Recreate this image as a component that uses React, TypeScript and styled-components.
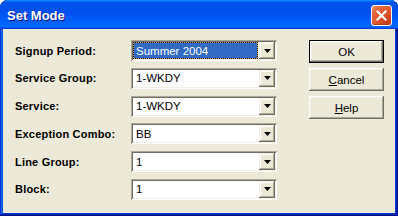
import { Fragment } from "react";
import styled, { createGlobalStyle } from "styled-components";

const GlobalStyle = createGlobalStyle`
  body {
    margin: 0;
    background: #ffffff;
  }
`;

const Window = styled.div`
  width: 398px;
  height: 216px;
  box-sizing: border-box;
  display: flex;
  flex-direction: column;
  background: #0831d9;
  border-radius: 8px 8px 0 0;
  box-shadow: inset -1px -1px #00138c, inset 1px 1px #0831d9,
    inset -2px -2px #001ea0, inset 2px 2px #166aee, inset -3px -3px #003bda,
    inset 3px 3px #0855dd;
  font-family: "Liberation Sans", Arial, sans-serif;
  overflow: hidden;
`;

const TitleBar = styled.div`
  height: 29px;
  flex: none;
  display: flex;
  align-items: center;
  justify-content: space-between;
  padding: 0 6px 0 7px;
  border-radius: 8px 8px 0 0;
  background: linear-gradient(
    180deg,
    #0997ff,
    #0053ee 8%,
    #0050ee 40%,
    #0066ff 88%,
    #0066ff 93%,
    #005bff 95%,
    #003dd7 96%,
    #003dd7
  );
`;

const Title = styled.span`
  color: #ffffff;
  font-weight: bold;
  font-size: 13px;
  text-shadow: 1px 1px #0f1089;
  margin-top: 1px;
`;

const CloseButton = styled.button`
  width: 21px;
  height: 21px;
  margin-top: 2px;
  padding: 0;
  border: 1px solid #ffffff;
  border-radius: 3px;
  display: flex;
  align-items: center;
  justify-content: center;
  background: radial-gradient(
    circle at 85% 85%,
    #c43c14 0%,
    #e0582e 50%,
    #e4683f 75%,
    #f0a083 100%
  );
  box-shadow: inset 0 -1px 1px #b23a10;
`;

const Content = styled.div`
  flex: 1;
  margin: 0 3px 3px;
  background: #ece9d8;
  display: flex;
  align-items: flex-start;
  gap: 32px;
  padding: 11px 11px 0 12px;
`;

const Form = styled.div`
  display: grid;
  grid-template-columns: 116px 146px;
  row-gap: 6.8px;
  align-items: center;
`;

const Label = styled.span`
  font-size: 11px;
  font-weight: bold;
  letter-spacing: 0.2px;
  color: #000000;
`;

const Combo = styled.div`
  height: 21px;
  box-sizing: border-box;
  padding: 2px;
  display: flex;
  background: #ffffff;
  box-shadow: inset 1px 1px #aca899, inset -1px -1px #ffffff,
    inset 2px 2px #716f64, inset -2px -2px #f1efe2;
`;

const Value = styled.span<{ $selected?: boolean }>`
  flex: 1;
  display: flex;
  align-items: center;
  font-size: 11.5px;
  box-sizing: border-box;
  padding-left: 2px;
  margin-right: 1px;
  color: ${(p) => (p.$selected ? "#ffffff" : "#000000")};
  border: 1px dotted ${(p) => (p.$selected ? "#000000" : "transparent")};
  background: ${(p) =>
    p.$selected
      ? "linear-gradient(#316ac5, #316ac5) padding-box, linear-gradient(#d8a838, #d8a838) border-box"
      : "none"};
`;

const DropButton = styled.span`
  width: 16px;
  flex: none;
  display: flex;
  align-items: center;
  justify-content: center;
  background: #ece9d8;
  box-shadow: inset -1px -1px #716f64, inset 1px 1px #f1efe2,
    inset -2px -2px #aca899, inset 2px 2px #ffffff;
`;

const Buttons = styled.div`
  display: flex;
  flex-direction: column;
  gap: 5px;
`;

const Button = styled.button<{ $default?: boolean }>`
  width: 75px;
  height: 23px;
  padding: 0;
  border: ${(p) => (p.$default ? "1px solid #000000" : "none")};
  background: #ece9d8;
  font-family: "Liberation Sans", Arial, sans-serif;
  font-size: 11.5px;
  color: #000000;
  box-shadow: inset -1px -1px #716f64, inset 1px 1px #ffffff,
    inset -2px -2px #aca899, inset 2px 2px #f1efe2;
`;

const Arrow = () => (
  <svg width="7" height="4" viewBox="0 0 7 4">
    <polygon points="0,0 7,0 3.5,4" fill="#000000" />
  </svg>
);

const fields = [
  { label: "Signup Period:", value: "Summer 2004", selected: true },
  { label: "Service Group:", value: "1-WKDY" },
  { label: "Service:", value: "1-WKDY" },
  { label: "Exception Combo:", value: "BB" },
  { label: "Line Group:", value: "1" },
  { label: "Block:", value: "1" },
];

const App = () => {
  return (
    <>
      <GlobalStyle />
      <Window>
        <TitleBar>
          <Title>Set Mode</Title>
          <CloseButton>
            <svg width="11" height="11" viewBox="0 0 11 11">
              <path
                d="M1.5 1.5 L9.5 9.5 M9.5 1.5 L1.5 9.5"
                stroke="#ffffff"
                strokeWidth="2.2"
                strokeLinecap="square"
              />
            </svg>
          </CloseButton>
        </TitleBar>
        <Content>
          <Form>
            {fields.map((f) => (
              <Fragment key={f.label}>
                <Label>{f.label}</Label>
                <Combo>
                  <Value $selected={f.selected}>{f.value}</Value>
                  <DropButton>
                    <Arrow />
                  </DropButton>
                </Combo>
              </Fragment>
            ))}
          </Form>
          <Buttons>
            <Button $default>OK</Button>
            <Button>
              <u>C</u>ancel
            </Button>
            <Button>
              <u>H</u>elp
            </Button>
          </Buttons>
        </Content>
      </Window>
    </>
  );
};

export default App;
